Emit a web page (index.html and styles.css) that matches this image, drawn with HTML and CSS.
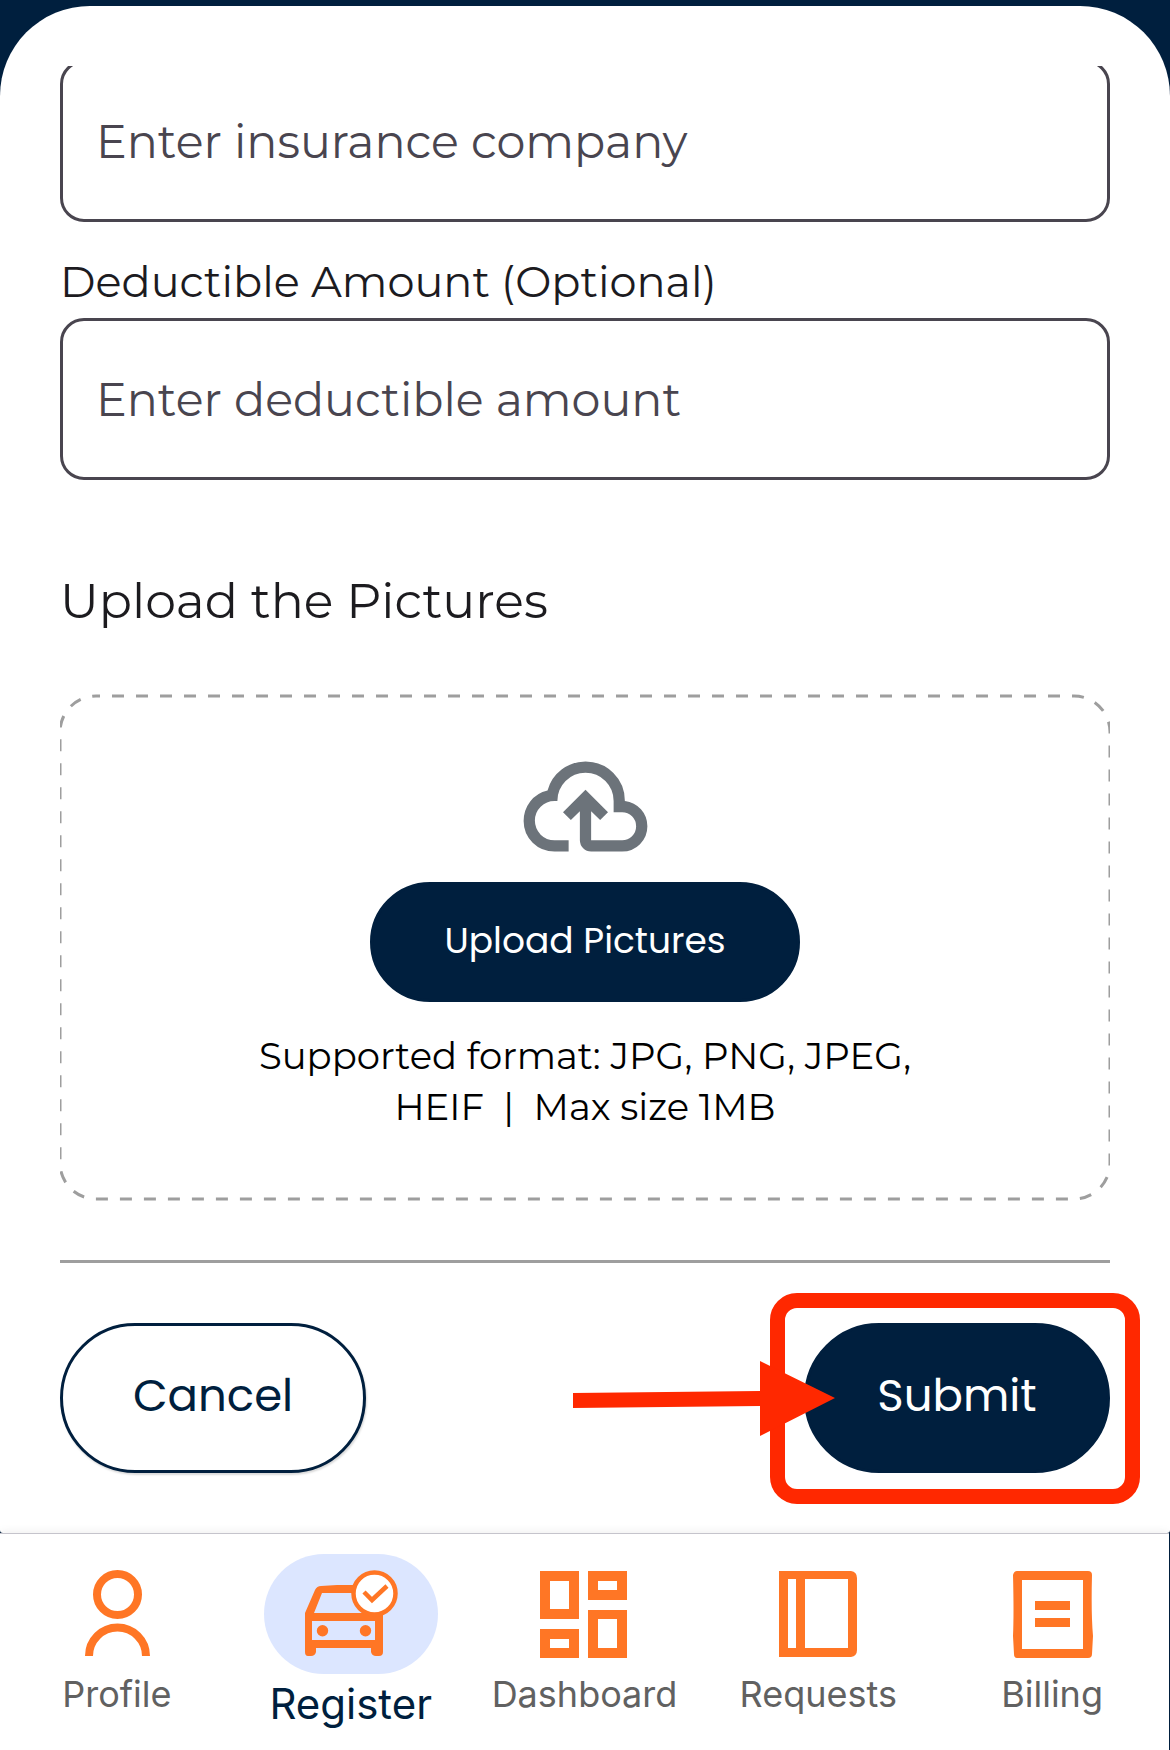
FILE: index.html
```html
<!DOCTYPE html>
<html lang="en">
<head>
<meta charset="UTF-8">
<meta name="viewport" content="width=device-width, initial-scale=1.0">
<title>Register</title>
<link rel="stylesheet" href="styles.css">
</head>
<body>
    <main class="sheet">
        <form class="form">
            <input class="field field-first" type="text" aria-label="Insurance company" placeholder="Enter insurance company">

            <label class="label" for="deductible">Deductible Amount (Optional)</label>
            <input class="field" id="deductible" type="text" placeholder="Enter deductible amount">

            <h2 class="title">Upload the Pictures</h2>
            <div class="upload">
                <svg class="upload-border" aria-hidden="true"><rect class="dashes" rx="36"/></svg>
                <svg class="cloud" viewBox="0 0 24 24" aria-hidden="true">
                    <path d="M6.5 20Q4.22 20 2.61 18.43 1 16.85 1 14.58 1 12.63 2.17 11.1 3.35 9.57 5.25 9.15 5.88 6.85 7.75 5.43 9.63 4 12 4 14.93 4 16.96 6.04 19 8.07 19 11 20.73 11.2 21.86 12.5 23 13.78 23 15.5 23 17.38 21.69 18.69 20.38 20 18.5 20H13Q12.18 20 11.59 19.41 11 18.83 11 18V12.85L9.4 14.4 8 13 12 9 16 13 14.6 14.4 13 12.85V18H18.5Q19.55 18 20.27 17.27 21 16.55 21 15.5 21 14.45 20.27 13.73 19.55 13 18.5 13H17V11Q17 8.93 15.54 7.46 14.08 6 12 6 9.93 6 8.46 7.46 7 8.93 7 11H6.5Q5.05 11 4.03 12.03 3 13.05 3 14.5 3 15.95 4.03 17 5.05 18 6.5 18H9V20Z"/>
                </svg>
                <button class="btn btn-upload" type="button">Upload Pictures</button>
                <p class="hint">Supported format: JPG, PNG, JPEG, HEIF &nbsp;|&nbsp; Max size 1MB</p>
            </div>

            <div class="actions">
                <button class="btn btn-cancel" type="button">Cancel</button>
                <div class="submit-wrap">
                    <button class="btn btn-submit" type="submit">Submit</button>
                    <span class="highlight"></span>
                    <svg class="arrow" viewBox="0 0 264 76" aria-hidden="true">
                        <path d="M1 32 188 30V0L263 37 188 75V45L1 47Z"/>
                    </svg>
                </div>
            </div>
        </form>
    </main>

    <nav class="tabs">
        <a class="tab" href="#profile">
            <span class="tab-icon">
                <svg viewBox="0 0 96 96" aria-hidden="true">
                    <g fill="none" stroke="currentColor" stroke-width="8">
                        <circle cx="48.5" cy="28.5" r="20.5"/>
                        <path d="M20 90a28.5 28.5 0 0 1 57 0"/>
                    </g>
                </svg>
            </span>
            Profile
        </a>
        <a class="tab active" href="#register">
            <span class="tab-icon">
                <svg viewBox="0 0 96 96" aria-hidden="true">
                    <path fill="currentColor" fill-rule="evenodd" d="M2 47 12 24Q14 20 18 20L34 19H56V27H19L11 47H80V86Q80 90 76 90H73Q69 90 68 86V82H13V86Q12 90 8 90H5Q2 90 2 86ZM9 55V74H72V55Z"/>
                    <circle cx="19.5" cy="64.7" r="5.7" fill="currentColor"/>
                    <circle cx="62.5" cy="64.7" r="5.7" fill="currentColor"/>
                    <circle cx="71.5" cy="27.5" r="21" fill="#fff" stroke="currentColor" stroke-width="4.5"/>
                    <path d="M61 26 69 34 84 20" fill="none" stroke="currentColor" stroke-width="4.5"/>
                </svg>
            </span>
            Register
        </a>
        <a class="tab" href="#dashboard">
            <span class="tab-icon">
                <svg viewBox="0 0 96 96" aria-hidden="true">
                    <path fill="currentColor" fill-rule="evenodd" d="M4 5H43V53H4ZM14 15V43H33V15ZM52 5H91V34H52ZM62 15V24H81V15ZM4 63H43V92H4ZM14 73V82H33V73ZM52 44H91V92H52ZM62 53V82H81V53Z"/>
                </svg>
            </span>
            Dashboard
        </a>
        <a class="tab" href="#requests">
            <span class="tab-icon">
                <svg viewBox="0 0 96 96" aria-hidden="true">
                    <path fill="currentColor" fill-rule="evenodd" d="M9 5H81Q87 6 87 12V84Q87 90 81 91H9ZM18 13V82H26V13ZM35 13V82H78V13Z"/>
                </svg>
            </span>
            Requests
        </a>
        <a class="tab" href="#billing">
            <span class="tab-icon">
                <svg viewBox="0 0 96 96" aria-hidden="true">
                    <path fill="currentColor" fill-rule="evenodd" d="M13 5H84Q88 5 88 9Q87 48 89 70L88 88Q88 92 84 92H13Q10 92 10 88L9 70Q10 48 9 9Q10 5 13 5ZM18 14V83H79V14Z"/>
                    <path fill="currentColor" d="M31 35H66V44H31ZM31 52H66V61H31Z"/>
                </svg>
            </span>
            Billing
        </a>
    </nav>
</body>
</html>
```
FILE: styles.css
```css
* {
    box-sizing: border-box;
}
body {
    display: flex;
    flex-direction: column;
    min-height: 100vh;
    margin: 0;
    padding-top: 6px;
    background-color: #001f3e;
    color: #1c1b1f;
    font-family: Montserrat, Inter, sans-serif;
}
.sheet {
    flex: 1;
    padding-top: 60px;
    background-color: #fff;
    border-radius: 90px 90px 3px 3px;
}
.form {
    display: flex;
    flex-direction: column;
    padding: 0 60px 60px;
    overflow: hidden;
}
.field {
    width: 100%;
    height: 162px;
    padding: 0 33px;
    border: 3px solid #49454f;
    border-radius: 24px;
    background-color: #fff;
    color: #49454f;
    font-family: inherit;
    font-size: 46px;
}
.field::placeholder {
    color: #49454f;
    opacity: 1;
}
/* first field is partly scrolled under the sheet header */
.field-first {
    margin-top: -6px;
}
.label {
    margin: 30px 0 6px;
    font-size: 43px;
    line-height: 60px;
}
.title {
    margin: 91px 0 63px;
    font-size: 49px;
    font-weight: 400;
    line-height: 60px;
}
.upload {
    position: relative;
    display: flex;
    flex-direction: column;
    align-items: center;
    padding: 45px 60px 69px;
}
.upload-border {
    position: absolute;
    top: 0;
    left: 0;
    width: 100%;
    height: 100%;
}
.dashes {
    x: 0;
    y: 2px;
    width: 100%;
    height: calc(100% - 4px);
    fill: none;
    stroke: #9e9e9e;
    stroke-width: 3px;
    stroke-dasharray: 12 12;
    stroke-dashoffset: 8px;
}
.cloud {
    width: 135px;
    height: 135px;
    margin-bottom: 8px;
    fill: #6c737a;
}
.btn {
    padding: 0 0 4px;
    border: 3px solid #001f3e;
    border-radius: 75px;
    background-color: #001f3e;
    color: #fff;
    font-family: Poppins, Inter, sans-serif;
    font-size: 45px;
    cursor: pointer;
}
.btn-upload {
    position: relative;
    height: 120px;
    width: 430px;
    font-size: 36px;
}
.hint {
    max-width: 700px;
    margin: 28px 0 0;
    color: #000;
    font-size: 37px;
    line-height: 51px;
    text-align: center;
}
.actions {
    display: flex;
    justify-content: space-between;
    margin-top: 59px;
    padding-top: 60px;
    border-top: 3px solid #9e9e9e;
}
.btn-cancel, .btn-submit {
    width: 306px;
    height: 150px;
}
.btn-cancel {
    background-color: #fff;
    color: #001f3e;
    box-shadow: 1px 2px 2px rgba(0, 0, 0, 0.15);
}
.submit-wrap {
    position: relative;
}
.highlight {
    position: absolute;
    inset: -30px -30px -31px -34px;
    border: 15px solid #ff2800;
    border-radius: 27px;
    pointer-events: none;
}
.arrow {
    position: absolute;
    top: 38px;
    right: 274px;
    width: 264px;
    height: 76px;
    fill: #ff2800;
    pointer-events: none;
}
.tabs {
    display: flex;
    margin-right: 1px;
    padding: 20px 0 16px;
    border-top: 1px solid #c5c4cc;
    background-color: #fff;
    box-shadow: 0 -2px 8px rgba(0, 0, 0, 0.06);
}
.tab {
    flex: 1 1 0;
    display: flex;
    flex-direction: column;
    align-items: center;
    height: 180px;
    color: #616161;
    font-family: Inter, sans-serif;
    font-size: 36px;
    line-height: 40px;
    text-decoration: none;
}
.tab-icon {
    display: flex;
    align-items: center;
    justify-content: center;
    width: 174px;
    height: 120px;
    border-radius: 60px;
    color: #ff7625;
}
.tab-icon svg {
    width: 96px;
    height: 96px;
}
.active {
    color: #001f3e;
    font-size: 42px;
    line-height: 60px;
}
.active .tab-icon {
    background-color: #dce6ff;
}
```
